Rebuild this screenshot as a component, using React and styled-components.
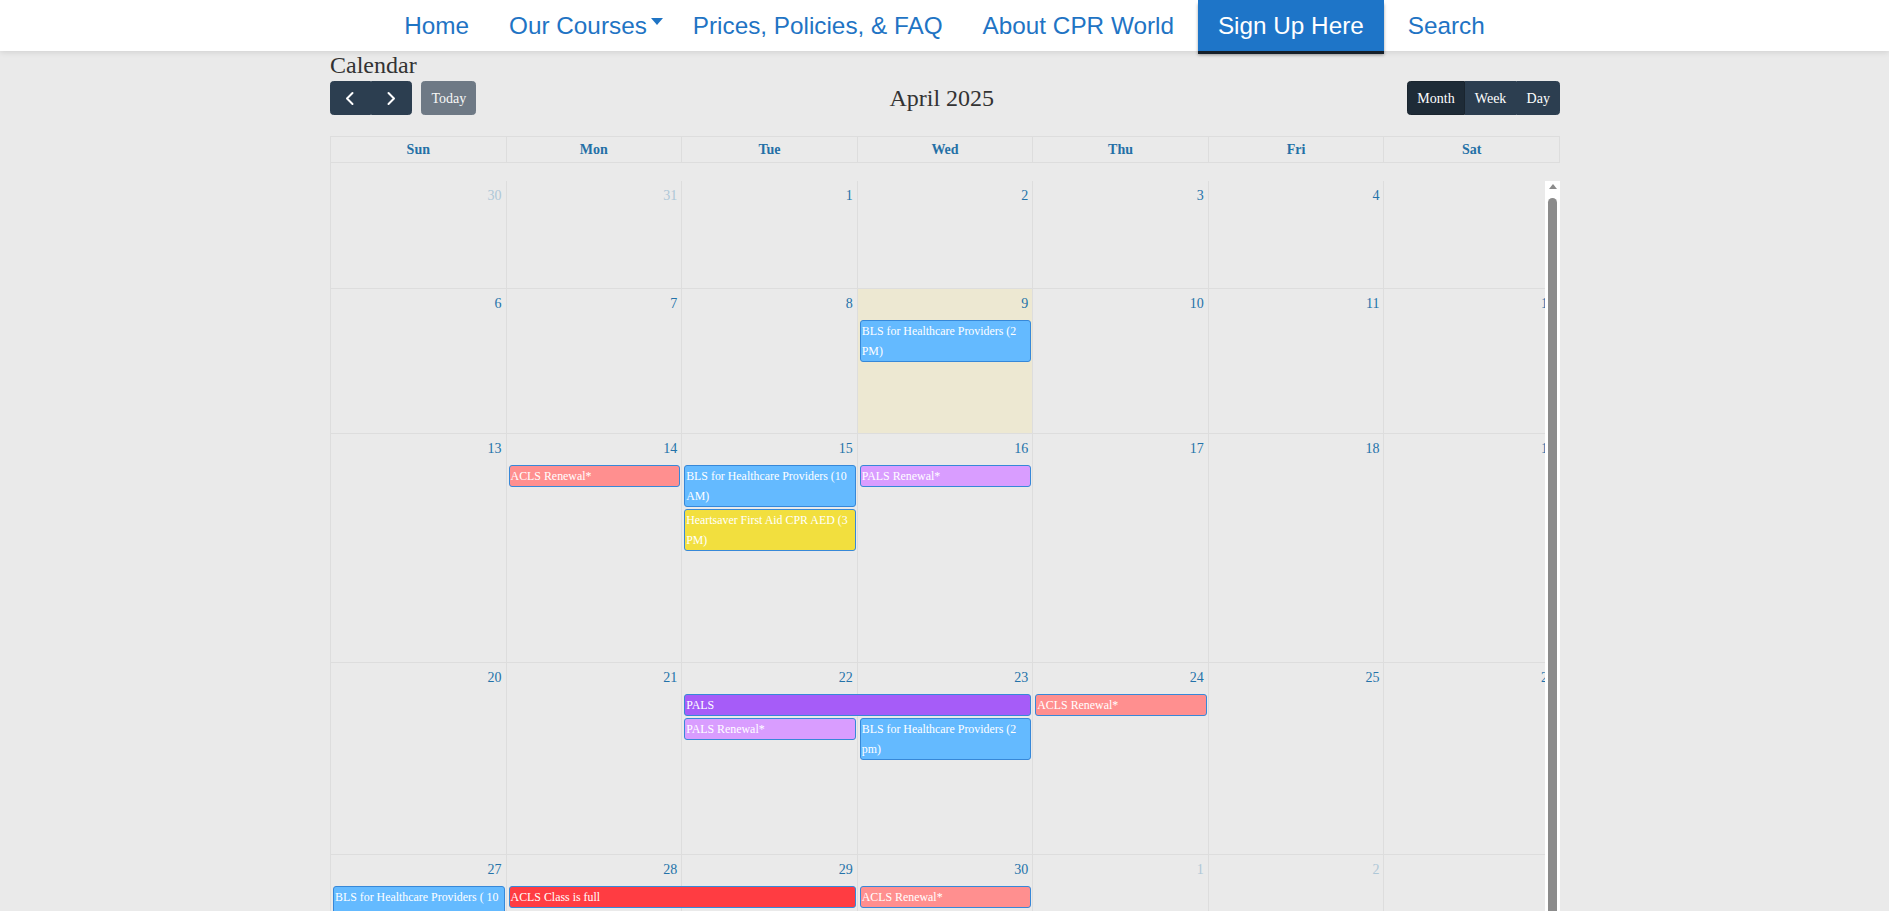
import React from 'react'
import styled, { createGlobalStyle, css } from 'styled-components'

const GlobalStyle = createGlobalStyle`
	*, *::before, *::after { box-sizing: border-box; }
	body {
		margin: 0;
		background: #eaeaea;
		font-family: "Liberation Serif", "Times New Roman", serif;
		font-size: 14px;
		color: #333;
	}
`

const EVENT_COLORS = {
	bls: '#64baff',
	aclsRenewal: '#ff8f8f',
	palsRenewal: '#d99dff',
	heartsaver: '#f2df3e',
	pals: '#a65cf8',
	full: '#ff3c42'
}

const WEEKDAYS = ['Sun', 'Mon', 'Tue', 'Wed', 'Thu', 'Fri', 'Sat']

const range = (from, n) => Array.from({ length: n }, (_, i) => from + i)

const WEEKS = [
	{ height: 108, days: [30, 31, 1, 2, 3, 4, 5], other: [0, 1], events: [] },
	{
		height: 145, days: range(6, 7), today: 3,
		events: [
			{ title: 'BLS for Healthcare Providers (2 PM)', col: 3, slot: 0, kind: 'bls' }
		]
	},
	{
		height: 229, days: range(13, 7),
		events: [
			{ title: 'ACLS Renewal*', col: 1, slot: 0, kind: 'aclsRenewal' },
			{ title: 'BLS for Healthcare Providers (10 AM)', col: 2, slot: 0, kind: 'bls' },
			{ title: 'Heartsaver First Aid CPR AED (3 PM)', col: 2, slot: 1, kind: 'heartsaver' },
			{ title: 'PALS Renewal*', col: 3, slot: 0, kind: 'palsRenewal' }
		]
	},
	{
		height: 192, days: range(20, 7),
		events: [
			{ title: 'PALS', col: 2, span: 2, slot: 0, kind: 'pals' },
			{ title: 'ACLS Renewal*', col: 4, slot: 0, kind: 'aclsRenewal' },
			{ title: 'PALS Renewal*', col: 2, slot: 1, kind: 'palsRenewal' },
			{ title: 'BLS for Healthcare Providers (2 pm)', col: 3, slot: 1, kind: 'bls' }
		]
	},
	{
		height: 230, days: [27, 28, 29, 30, 1, 2, 3], other: [4, 5, 6],
		events: [
			{ title: 'BLS for Healthcare Providers ( 10 AM)', col: 0, slot: 0, kind: 'bls' },
			{ title: 'ACLS Class is full', col: 1, span: 2, slot: 0, kind: 'full' },
			{ title: 'ACLS Renewal*', col: 3, slot: 0, kind: 'aclsRenewal' }
		]
	},
	{ height: 196, days: range(4, 7), other: range(0, 7), events: [] }
]

const Page = styled.div`
	height: 100vh;
	overflow: hidden;
	display: flex;
	flex-direction: column;
`

const NavBar = styled.nav`
	flex: none;
	height: 51px;
	background: #fff;
	box-shadow: 0 1px 6px rgba(0, 0, 0, 0.12);
	display: flex;
	justify-content: center;
	position: relative;
	z-index: 2;
	font-family: "Liberation Sans", Arial, sans-serif;
`

const NavLink = styled.a`
	display: flex;
	align-items: center;
	padding: 0 20px;
	font-size: 24.3px;
	color: #1f74c4;
	text-decoration: none;
	white-space: nowrap;
	${p => p.$dropdown && css`
		padding-right: 10px;
	`}
	${p => p.$cta && css`
		margin: 0 4px;
		height: 51px;
		background: #1e75c8;
		color: #fff;
		box-shadow: 0 3px 0 #16202a, 0 4px 3px rgba(0, 0, 0, 0.35);
	`}
`

const Caret = styled.span`
	width: 0;
	height: 0;
	margin: 0 0 8px 4px;
	border-top: 7px solid #1f74c4;
	border-left: 6px solid transparent;
	border-right: 6px solid transparent;
`

const Container = styled.main`
	flex: 1;
	min-height: 0;
	width: 1231px;
	margin: 0 auto;
	padding-left: 1px;
	display: flex;
	flex-direction: column;
`

const Heading = styled.h1`
	margin: 0;
	font-size: 24px;
	font-weight: normal;
	line-height: 28px;
	color: #333;
`

const Toolbar = styled.div`
	display: flex;
	justify-content: space-between;
	align-items: center;
	margin: 2px 0 21px;
`

const ToolGroup = styled.div`
	display: flex;
	align-items: center;
	gap: 9px;
`

const Title = styled.h2`
	margin: 0;
	font-size: 24px;
	font-weight: normal;
	color: #333;
`

const Btn = styled.button`
	display: inline-flex;
	align-items: center;
	justify-content: center;
	font-family: inherit;
	font-size: 14px;
	line-height: 21px;
	padding: 5.6px 9.1px;
	color: #fff;
	background: #2c3e50;
	border: 1px solid #2c3e50;
	border-radius: 3.5px;
	${p => p.$active && css`
		background: #1e2b37;
		border-color: #1a252f;
	`}
	&:disabled { opacity: 0.65; }
`

const BtnGroup = styled.div`
	display: inline-flex;
	& > ${Btn}:not(:first-child) {
		border-top-left-radius: 0;
		border-bottom-left-radius: 0;
	}
	& > ${Btn}:not(:last-child) {
		border-top-right-radius: 0;
		border-bottom-right-radius: 0;
	}
`

const Table = styled.div`
	flex: 1;
	min-height: 0;
	display: flex;
	flex-direction: column;
	border-left: 1px solid #ddd;
`

const HeadRow = styled.div`
	flex: none;
	display: grid;
	grid-template-columns: repeat(7, 1fr);
	border-top: 1px solid #ddd;
`

const HeadCell = styled.div`
	padding: 2px 4px;
	line-height: 21px;
	text-align: center;
	font-weight: bold;
	color: #2470a6;
	border-right: 1px solid #ddd;
	border-bottom: 1px solid #ddd;
`

const Spacer = styled.div`
	flex: none;
	height: 18px;
`

// scroll body: the month grid is wider than the visible area, the bar sits on its right edge
const Body = styled.div`
	flex: none;
	height: 1000px;
	display: flex;
`

const Viewport = styled.div`
	flex: 1;
	min-width: 0;
	overflow: hidden;
`

const ScrollTrack = styled.div`
	flex: none;
	width: 15px;
	background: #fff;
	display: flex;
	flex-direction: column;
	align-items: center;
`

const ScrollArrow = styled.div`
	flex: none;
	height: 17px;
	padding-top: 3px;
	&::before {
		content: '';
		display: block;
		border-bottom: 5px solid #8b8b8b;
		border-left: 4.5px solid transparent;
		border-right: 4.5px solid transparent;
	}
`

const ScrollThumb = styled.div`
	flex: none;
	width: 9px;
	height: 880px;
	background: #8b8b8b;
	border-radius: 5px;
`

const Month = styled.div`
	width: 1229px;
`

const Week = styled.div`
	display: grid;
	grid-template-columns: repeat(7, 1fr);
	grid-template-rows: 30px ${p => p.$slots ? `repeat(${p.$slots}, auto)` : ''} 1fr;
	height: ${p => p.$height}px;
`

const DayCell = styled.div`
	grid-column: ${p => p.$col + 1};
	grid-row: 1 / -1;
	border-right: 1px solid #ddd;
	border-bottom: 1px solid #ddd;
	background: ${p => p.$today ? '#ede8d2' : 'transparent'};
`

const DayNumber = styled.div`
	grid-column: ${p => p.$col + 1};
	grid-row: 1;
	padding: 4px 5px 0;
	line-height: 21px;
	text-align: right;
	color: ${p => p.$other ? '#aec7d7' : '#2372a9'};
`

const Event = styled.div`
	grid-column: ${p => p.$col + 1} / span ${p => p.$span};
	grid-row: ${p => p.$slot + 2};
	align-self: start;
	min-width: 0;
	margin: 1px 2px;
	padding: 0 1px;
	border: 1px solid #3788d8;
	border-radius: 3px;
	background: ${p => p.$bg};
	color: #fff;
	font-size: 11.9px;
	line-height: 20px;
	overflow: hidden;
`

const Chevron = ({ dir }) =>
	<svg width='21' height='21' viewBox='0 0 21 21' fill='none' stroke='#fff'
		strokeWidth='2' strokeLinecap='round' strokeLinejoin='round'>
		<path d={dir === 'left' ? 'M12.5 5 7 10.5 12.5 16' : 'M7.5 5 13 10.5 7.5 16'} />
	</svg>

const WeekRow = ({ week }) => {
	const slots = week.events.reduce((m, e) => Math.max(m, e.slot + 1), 0)
	const other = week.other || []

	return (
		<Week $height={week.height} $slots={slots}>
			{ week.days.map((d, i) =>
				<DayCell key={'c' + i} $col={i} $today={week.today === i} />
			)}
			{ week.days.map((d, i) =>
				<DayNumber key={'n' + i} $col={i} $other={other.includes(i)}>
					{ d }
				</DayNumber>
			)}
			{ week.events.map((e, i) =>
				<Event
					key={'e' + i}
					$col={e.col}
					$span={e.span || 1}
					$slot={e.slot}
					$bg={EVENT_COLORS[e.kind]}
					>
					{ e.title }
				</Event>
			)}
		</Week>
	)
}

const App = () =>
	<Page>
		<GlobalStyle />
		<NavBar>
			<NavLink href='#'>Home</NavLink>
			<NavLink href='#' $dropdown>Our Courses<Caret /></NavLink>
			<NavLink href='#'>Prices, Policies, &amp; FAQ</NavLink>
			<NavLink href='#'>About CPR World</NavLink>
			<NavLink href='#' $cta>Sign Up Here</NavLink>
			<NavLink href='#'>Search</NavLink>
		</NavBar>
		<Container>
			<Heading>Calendar</Heading>
			<Toolbar>
				<ToolGroup>
					<BtnGroup>
						<Btn aria-label='prev'><Chevron dir='left' /></Btn>
						<Btn aria-label='next'><Chevron dir='right' /></Btn>
					</BtnGroup>
					<Btn disabled>Today</Btn>
				</ToolGroup>
				<Title>April 2025</Title>
				<BtnGroup>
					<Btn $active>Month</Btn>
					<Btn>Week</Btn>
					<Btn>Day</Btn>
				</BtnGroup>
			</Toolbar>
			<Table>
				<HeadRow>
					{ WEEKDAYS.map(d => <HeadCell key={d}>{ d }</HeadCell>) }
				</HeadRow>
				<Spacer />
				<Body>
					<Viewport>
						<Month>
							{ WEEKS.map((w, i) => <WeekRow key={i} week={w} />) }
						</Month>
					</Viewport>
					<ScrollTrack>
						<ScrollArrow />
						<ScrollThumb />
					</ScrollTrack>
				</Body>
			</Table>
		</Container>
	</Page>

export default App
